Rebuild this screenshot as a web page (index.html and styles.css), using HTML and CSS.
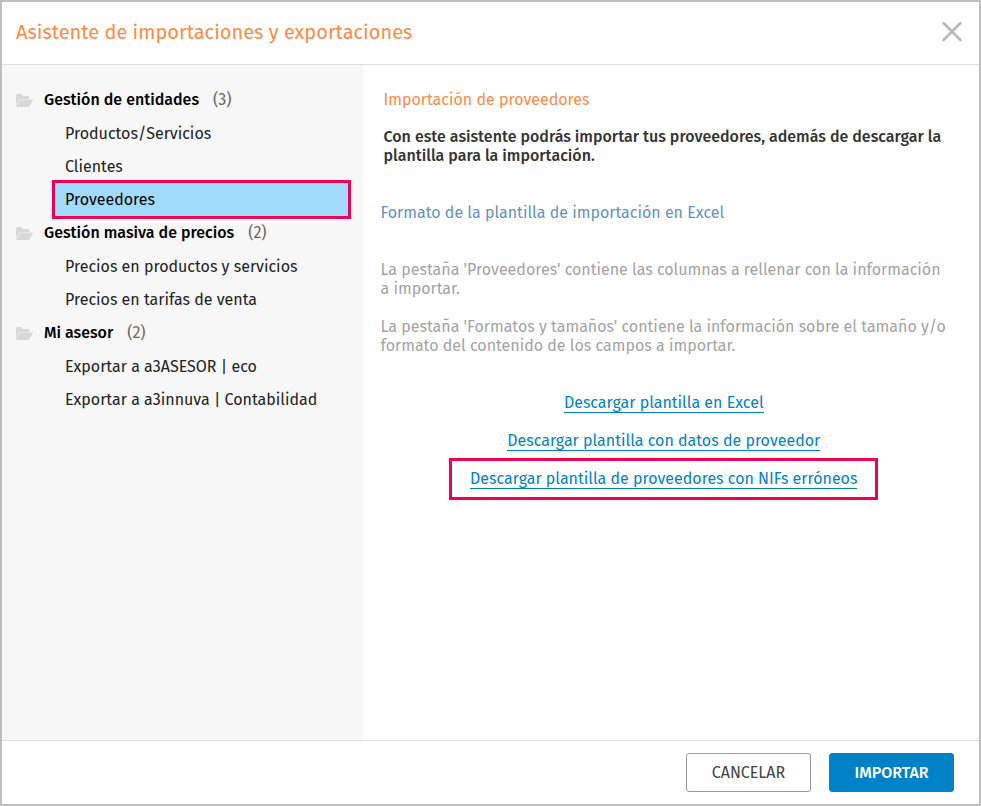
FILE: index.html
```
<!DOCTYPE html>
<html lang="es">
<head>
    <meta charset="UTF-8">
    <meta name="viewport" content="width=device-width, initial-scale=1.0">
    <title>Asistente de importaciones y exportaciones</title>
    <link rel="stylesheet" href="styles.css">
</head>
<body>
    <svg class="sprite" aria-hidden="true">
        <symbol id="folder" viewBox="0 0 17 13">
            <path d="M0 11V1.500Q0 0 1.500 0H5Q6.500 0 6.500 1.500V2H12Q13.500 2 13.500 3.500V5H5.500Q4 5 3 6.500Z"/>
            <path d="M5.500 5.500H16.500Q17.200 5.500 16.700 6.500L13.700 11.800Q13 13 11.500 13H1Q0 13 .3 12L3.200 7Q4.200 5.500 5.500 5.500Z"/>
        </symbol>
    </svg>

    <div class="dialog">
        <header class="header">
            <h1>Asistente de importaciones y exportaciones</h1>
            <button type="button" class="close" aria-label="Cerrar">
                <svg width="20" height="20" viewBox="0 0 20 20"><path d="M1.500 1L18.500 18M18.500 1L1.500 18"/></svg>
            </button>
        </header>

        <div class="content">
            <nav class="sidebar">
                <h2><svg class="folder"><use href="#folder"/></svg>Gestión de entidades <span>(3)</span></h2>
                <ul>
                    <li><a href="#">Productos/Servicios</a></li>
                    <li><a href="#">Clientes</a></li>
                    <li><a href="#" class="selected">Proveedores</a></li>
                </ul>
                <h2><svg class="folder"><use href="#folder"/></svg>Gestión masiva de precios <span>(2)</span></h2>
                <ul>
                    <li><a href="#">Precios en productos y servicios</a></li>
                    <li><a href="#">Precios en tarifas de venta</a></li>
                </ul>
                <h2><svg class="folder"><use href="#folder"/></svg>Mi asesor <span>(2)</span></h2>
                <ul>
                    <li><a href="#">Exportar a a3ASESOR | eco</a></li>
                    <li><a href="#">Exportar a a3innuva | Contabilidad</a></li>
                </ul>
            </nav>

            <main class="main">
                <h2>Importación de proveedores</h2>
                <p class="intro">Con este asistente podrás importar tus proveedores, además de descargar la plantilla para la importación.</p>
                <h3>Formato de la plantilla de importación en Excel</h3>
                <p>La pestaña 'Proveedores' contiene las columnas a rellenar con la información a importar.</p>
                <p>La pestaña 'Formatos y tamaños' contiene la información sobre el tamaño y/o formato del contenido de los campos a importar.</p>
                <div class="links">
                    <a href="#">Descargar plantilla en Excel</a>
                    <a href="#">Descargar plantilla con datos de proveedor</a>
                    <div class="marked"><a href="#">Descargar plantilla de proveedores con NIFs erróneos</a></div>
                </div>
            </main>
        </div>

        <footer class="footer">
            <button type="button" class="btn">CANCELAR</button>
            <button type="button" class="btn primary">IMPORTAR</button>
        </footer>
    </div>
</body>
</html>
```
FILE: styles.css
```
* {
    box-sizing: border-box;
}
body {
    margin: 0;
    font-family: "Fira Sans", "Noto Sans", sans-serif;
    font-size: 16px;
    line-height: 19px;
    color: #333;
}
h1, h2, h3, p, ul {
    margin: 0;
    padding: 0;
    font-weight: normal;
}
.sprite {
    display: none;
}
.dialog {
    display: flex;
    flex-direction: column;
    min-height: 100vh;
    border: 2px solid #bfbfbf;
    background-color: #fff;
}
.header {
    display: flex;
    justify-content: space-between;
    align-items: center;
    padding: 15px 17px 17px 14px;
    border-bottom: 1px solid #e0e0e0;
}
.header h1 {
    font-size: 20px;
    line-height: 30px;
    color: #ff8a45;
}
.close {
    display: flex;
    padding: 0;
    border: none;
    background: none;
    cursor: pointer;
}
.close path {
    stroke: #b9b9b9;
    stroke-width: 2.5;
    stroke-linecap: round;
}
.content {
    display: flex;
    flex: 1;
}
.sidebar {
    width: 37%;
    padding: 18px 12px 18px 14px;
    background-color: #f7f7f7;
}
.sidebar h2 {
    display: flex;
    align-items: center;
    font-size: 16px;
    font-weight: 500;
    line-height: 34px;
    color: #000;
}
.sidebar h2 span {
    margin-left: 14px;
    color: #666;
    font-weight: 400;
}
.folder {
    width: 17px;
    height: 13px;
    margin-right: 11px;
    fill: #d8d8d8;
}
.sidebar ul {
    margin-left: 36px;
    list-style: none;
}
.sidebar a {
    display: block;
    padding-left: 13px;
    line-height: 33px;
    color: #222;
    text-decoration: none;
}
.sidebar a.selected {
    margin: -3px 0;
    padding-left: 10px;
    border: 3px solid #ee0055;
    background-color: #a1dafb;
    color: #000;
}
.main {
    flex: 1;
    padding: 25px 32px 25px 17px;
    color: #a3a3a3;
}
.main h2 {
    margin: 0 3px 18px;
    font-size: 16px;
    color: #ff8a45;
}
.main h3 {
    margin: 38px 0;
    font-size: 16px;
    color: #6590c4;
}
.main p {
    margin-bottom: 19px;
}
.main .intro {
    margin: 0 3px;
    font-weight: 500;
    color: #333;
}
.links {
    display: flex;
    flex-direction: column;
    align-items: center;
    margin-top: 38px;
}
.links a {
    margin-bottom: 18px;
    border-bottom: 1px solid #0082c9;
    color: #0082c9;
    text-decoration: none;
}
.marked {
    margin-top: -11px;
    padding: 8px 18px;
    border: 3px solid #ee0055;
}
.marked a {
    display: block;
    margin: 0;
}
.footer {
    display: flex;
    justify-content: flex-end;
    gap: 18px;
    padding: 12px 25px;
    border-top: 1px solid #e0e0e0;
}
.btn {
    min-width: 125px;
    height: 39px;
    border: 1px solid #999;
    border-radius: 3px;
    background-color: #fff;
    font-family: inherit;
    font-size: 16px;
    color: #444;
    cursor: pointer;
}
.btn.primary {
    border-color: #0082c9;
    background-color: #0082c9;
    font-weight: 500;
    color: #fff;
}
```
